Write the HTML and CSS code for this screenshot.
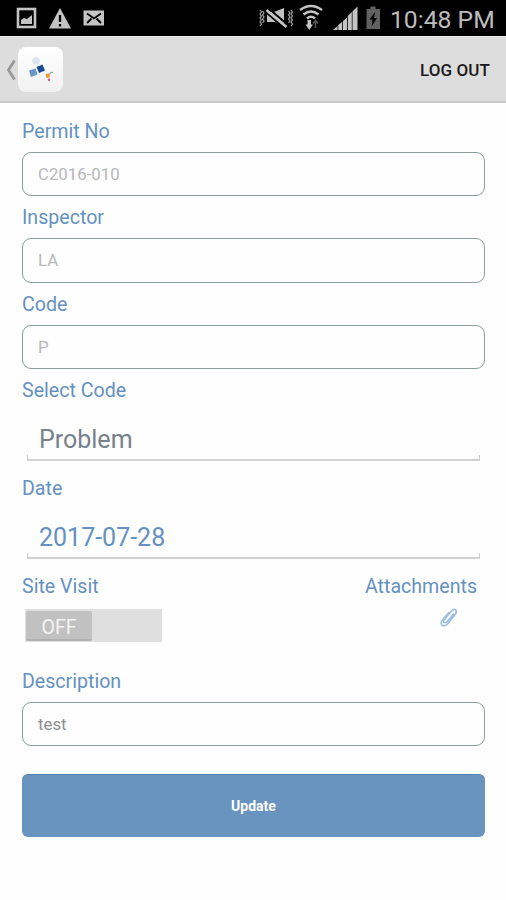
FILE: index.html
```html
<!DOCTYPE html>
<html lang="en">
<head>
<meta charset="utf-8">
<title>Inspection</title>
<link rel="stylesheet" href="styles.css">
</head>
<body>
<div class="status">
  <svg class="notices" width="120" height="36" viewBox="0 0 120 36">
    <rect x="18" y="9" width="17" height="18" fill="none" stroke="#c4c4c4" stroke-width="2.6"/>
    <path d="M21 24v-4l3-2 3 1 5-4v9z" fill="#c4c4c4"/>
    <path d="M60 8l11 20.500H49z" fill="#c4c4c4"/>
    <path d="M60 15v7M60 24v2.500" stroke="#000" stroke-width="2.300"/>
    <rect x="83.500" y="10.500" width="20.500" height="15" fill="#c4c4c4"/>
    <path d="M87 13.500l7 5 7-5M87 23l4.500-4.500M101 23l-4.500-4.500" fill="none" stroke="#000" stroke-width="1.800"/>
  </svg>
  <svg class="signals" width="130" height="36" viewBox="258 0 130 36">
    <g fill="none" stroke="#a8a8a8" stroke-width="1.200">
      <path d="M260 10l1.500 2-1.500 2 1.500 2-1.500 2 1.500 2-1.500 2 1.500 2-1.500 2"/>
      <path d="M262.500 11l1.500 2-1.500 2 1.500 2-1.500 2 1.500 2-1.500 2"/>
      <path d="M288.500 11l1.500 2-1.500 2 1.500 2-1.500 2 1.500 2-1.500 2"/>
      <path d="M291 10l1.500 2-1.500 2 1.500 2-1.500 2 1.500 2-1.500 2 1.500 2-1.500 2"/>
    </g>
    <path d="M267 12h7l10-4v18l-9-4h-8z" fill="#c0c0c0"/>
    <path d="M268 8l20 17" stroke="#000" stroke-width="2"/>
    <path d="M265 11.500l20 17" stroke="#000" stroke-width="1.800"/>
    <path d="M266.500 10l20 17" stroke="#c4c4c4" stroke-width="2.400"/>
    <g fill="none" stroke="#c4c4c4" stroke-width="2.400">
      <path d="M300 10q11-8 22 0"/><path d="M303.500 14.500q7.500-6 15 0"/><path d="M307 18.500q4-3.500 8 0"/>
    </g>
    <path d="M307.500 20h3.500v4.500h2l-3.700 5.500-3.800-5.500h2z" fill="#c4c4c4"/>
    <path d="M315.500 28v-6M313 23.500l2.500-3 2.500 3" fill="none" stroke="#555" stroke-width="1.600"/>
    <g fill="#c4c4c4">
      <path d="M333 30l4.500-4v4z"/><path d="M338.200 25l4-3.300V30h-4z"/><path d="M343 21l4-3.300V30h-4z"/><path d="M347.800 16l4-4v18h-4z"/><path d="M352.500 11.500l5-5V30h-5z"/>
    </g>
    <path d="M366.500 9h4V6.500h5V9h4.500v20h-13.500z" fill="#606060"/>
    <path d="M375 12l-5.500 7.500h3l-1 7 5.500-8.500h-3z" fill="#000"/>
  </svg>
  <time class="clock">10:48 PM</time>
</div>
<header class="bar">
  <svg class="back" width="10" height="22" viewBox="0 0 10 22"><path d="M8.500 1.500L2.500 11l6 9.500" fill="none" stroke="#999" stroke-width="2.800"/></svg>
  <div class="logo">
    <svg width="44" height="44" viewBox="0 0 44 44">
      <circle cx="18" cy="14" r="3.800" fill="#dbe4ef"/>
      <path d="M11 23.500l6.500-2 2 6-6.500 2.500z" fill="#6795c8"/>
      <path d="M18.500 20l6-2.500 2.500 6-6 2.500z" fill="#194b94"/>
      <path d="M27.500 27l4-.7.500 4-3.700.7z" fill="#f29a2e"/>
      <path d="M31.500 27q1.500-2 3.500-1.500" fill="none" stroke="#7bb8a5" stroke-width="1.200"/>
      <circle cx="31" cy="32.800" r="1.200" fill="#e34c68"/>
    </svg>
  </div>
  <span class="logout">LOG OUT</span>
</header>
<main class="form">
  <div class="label">Permit No</div>
  <div class="input">C2016-010</div>
  <div class="label">Inspector</div>
  <div class="input">LA</div>
  <div class="label">Code</div>
  <div class="input">P</div>
  <div class="label">Select Code</div>
  <div class="picker"><span>Problem</span></div>
  <div class="label spaced">Date</div>
  <div class="picker date"><span>2017-07-28</span></div>
  <div class="pair">
    <div class="label">Site Visit</div>
    <div class="label">Attachments</div>
  </div>
  <div class="controls">
    <div class="switch"><span class="thumb">OFF</span></div>
    <svg class="clip" width="22" height="24" viewBox="0 0 22 24"><path d="M15.500 8L9 15.800q-1.800 1.700-3 .4-1-1.300.5-3L13.500 5q2.300-2.500 4-1.200 1.700 1.500 0 4.200L10 17.500q-3.500 3.800-6 1.600-2-2.200.6-5.300L11 6.500" fill="none" stroke="#9bbde3" stroke-width="1.600" stroke-linecap="round"/></svg>
  </div>
  <div class="label">Description</div>
  <div class="input active">test</div>
  <div class="update">Update</div>
</main>
</body>
</html>
```
FILE: styles.css
```css
* { box-sizing: border-box; }
body {
  margin: 0;
  min-height: 900px;
  background: #fefefe;
  font-family: Roboto, "Liberation Sans", sans-serif;
}
.status {
  display: flex;
  height: 36px;
  background: #000;
}
.signals { margin-left: 138px; }
.clock {
  margin-left: 2px;
  color: #bcbcbc;
  font-size: 24.700px;
  line-height: 40px;
  white-space: nowrap;
}
.bar {
  display: flex;
  align-items: center;
  height: 67px;
  padding: 1px 16px 0 6px;
  background: #ddd;
  border-top: 1px solid #eee;
  border-bottom: 2px solid #c9c9c9;
}
.logo {
  width: 45px;
  height: 45px;
  margin-left: 2px;
  border-radius: 8px;
  background: linear-gradient(#fff, #f1f1f1);
}
.logout {
  margin-left: auto;
  color: #1a1a1a;
  font-size: 17px;
  font-weight: 500;
  letter-spacing: 0.1px;
}
.form { padding: 7px 21px 0 22px; }
.label {
  height: 42px;
  color: #6491c1;
  font-size: 19.600px;
  font-weight: 400;
  line-height: 44px;
}
.input {
  height: 44.300px;
  padding-left: 15px;
  border: 1.500px solid #8c9b9c;
  border-radius: 9px;
  color: #b8b8b8;
  font-size: 16.800px;
  line-height: 43px;
}
.input.active { color: #8e8e8e; }
.picker {
  height: 50px;
  margin: 0 5px;
  padding-left: 12px;
  color: #76818b;
  font-size: 25px;
  line-height: 57px;
  background:
    linear-gradient(#ccc, #ccc) left bottom / 1px 6px no-repeat,
    linear-gradient(#ccc, #ccc) right bottom / 1px 6px no-repeat,
    linear-gradient(#d2d2d2, #d2d2d2) left bottom / 100% 2px no-repeat;
}
.spaced { margin-top: 6px; }
.date { color: #6491c1; }
.pair {
  display: flex;
  justify-content: space-between;
  margin-top: 6px;
  padding-right: 8px;
}
.pair .label { line-height: 43px; }
.controls {
  display: flex;
  justify-content: space-between;
  height: 53px;
  padding: 2px 25px 0 3px;
}
.switch {
  width: 137px;
  height: 33px;
  padding: 2px 1px;
  background: #dfdfdf;
}
.thumb {
  display: block;
  width: 66px;
  height: 30px;
  border-bottom: 2px solid #b0b0b0;
  border-radius: 2px;
  background: #c1c1c1;
  color: #f3f3f3;
  font-size: 19.500px;
  line-height: 33px;
  text-align: center;
}
.clip { margin-top: -3px; }
.update {
  height: 63px;
  margin-top: 28px;
  border-top: 1px solid #4f7fae;
  border-radius: 6px;
  background: #6994bf;
  color: #fff;
  font-size: 14px;
  font-weight: 700;
  line-height: 63px;
  text-align: center;
}
```
